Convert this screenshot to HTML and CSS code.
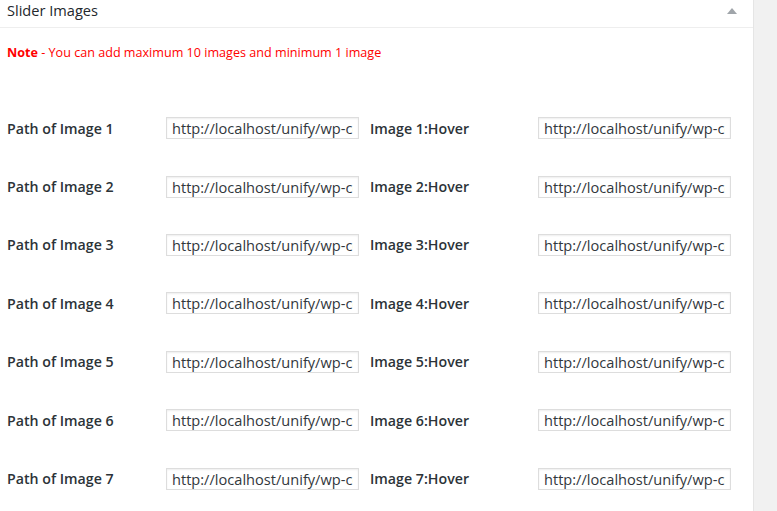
FILE: index.html
```html
<!DOCTYPE html>
<html>
<head>
<meta charset="utf-8">
<link rel="stylesheet" href="styles.css">
</head>
<body>
<div class="page">
  <div class="postbox">
    <div class="hndle">
      <span class="title">Slider Images</span>
      <span class="toggle"></span>
    </div>
    <div class="inside">
      <p class="note"><b>Note</b> - You can add maximum 10 images and minimum 1 image</p>
      <div class="rows">
        <div class="row"><label>Path of Image 1</label><input class="field" value="http://localhost/unify/wp-content/uploads/slide1.jpg"><label class="hover">Image 1:Hover</label><input class="field" value="http://localhost/unify/wp-content/uploads/slide1-hover.jpg"></div>
        <div class="row"><label>Path of Image 2</label><input class="field" value="http://localhost/unify/wp-content/uploads/slide2.jpg"><label class="hover">Image 2:Hover</label><input class="field" value="http://localhost/unify/wp-content/uploads/slide2-hover.jpg"></div>
        <div class="row"><label>Path of Image 3</label><input class="field" value="http://localhost/unify/wp-content/uploads/slide3.jpg"><label class="hover">Image 3:Hover</label><input class="field" value="http://localhost/unify/wp-content/uploads/slide3-hover.jpg"></div>
        <div class="row"><label>Path of Image 4</label><input class="field" value="http://localhost/unify/wp-content/uploads/slide4.jpg"><label class="hover">Image 4:Hover</label><input class="field" value="http://localhost/unify/wp-content/uploads/slide4-hover.jpg"></div>
        <div class="row"><label>Path of Image 5</label><input class="field" value="http://localhost/unify/wp-content/uploads/slide5.jpg"><label class="hover">Image 5:Hover</label><input class="field" value="http://localhost/unify/wp-content/uploads/slide5-hover.jpg"></div>
        <div class="row"><label>Path of Image 6</label><input class="field" value="http://localhost/unify/wp-content/uploads/slide6.jpg"><label class="hover">Image 6:Hover</label><input class="field" value="http://localhost/unify/wp-content/uploads/slide6-hover.jpg"></div>
        <div class="row"><label>Path of Image 7</label><input class="field" value="http://localhost/unify/wp-content/uploads/slide7.jpg"><label class="hover">Image 7:Hover</label><input class="field" value="http://localhost/unify/wp-content/uploads/slide7-hover.jpg"></div>
      </div>
    </div>
  </div>
</div>
</body>
</html>
```

FILE: styles.css
```css
html, body {
  margin: 0;
  padding: 0;
  background: #f1f1f1;
  font-family: "Open Sans", "Liberation Sans", sans-serif;
  color: #23282d;
  overflow: hidden;
}
.page {
  width: 777px;
  height: 511px;
}
.postbox {
  width: 753px;
  height: 511px;
  background: #fff;
  border-right: 1px solid #e5e5e5;
}
.hndle {
  height: 28px;
  border-bottom: 1px solid #eee;
  display: flex;
  align-items: center;
  justify-content: space-between;
  padding: 0 16px 0 7px;
  box-sizing: border-box;
}
.title {
  font-size: 14.6px;
  line-height: 1.4;
  position: relative;
  top: -3px;
}
.toggle {
  width: 0;
  height: 0;
  border-left: 5px solid transparent;
  border-right: 5px solid transparent;
  border-bottom: 6px solid #a0a5aa;
  position: relative;
  top: -3px;
}
.inside {
  padding: 0 7px;
}
.note {
  margin: 0;
  padding-top: 17px;
  height: 54px;
  box-sizing: content-box;
  font-size: 12.6px;
  line-height: 16px;
  color: #ff0000;
}
.note b {
  font-weight: 700;
}
.rows {
  display: flex;
  flex-direction: column;
}
.row {
  display: grid;
  grid-template-columns: 159px 193px 179px 193px;
  align-items: center;
  height: 58.4px;
}
.row label {
  font-size: 14.2px;
  font-weight: 600;
  color: #2c3338;
}
.row .hover {
  padding-left: 11px;
}
.field {
  box-sizing: border-box;
  width: 193px;
  height: 22px;
  border: 1px solid #ddd;
  box-shadow: inset 0 1px 2px rgba(0,0,0,0.07);
  padding: 0 5px;
  font-family: "Open Sans", "Liberation Sans", sans-serif;
  font-size: 14.6px;
  color: #32373c;
  background: #fff;
  outline: none;
  margin: 0;
}
```
